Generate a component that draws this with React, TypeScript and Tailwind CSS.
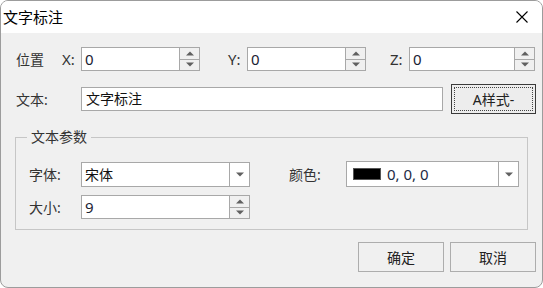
import React from "react";

const FONT = { fontFamily: "'Noto Sans', 'Noto Sans CJK SC', sans-serif" };

function Up() {
  return (
    <svg width="8" height="5" viewBox="0 0 8 5">
      <path d="M0 4.5 L4 0.5 L8 4.5 Z" fill="#606060" />
    </svg>
  );
}
function Down() {
  return (
    <svg width="8" height="5" viewBox="0 0 8 5">
      <path d="M0 0.5 L8 0.5 L4 4.5 Z" fill="#606060" />
    </svg>
  );
}

function Spin({ w, value }: { w: string; value: string }) {
  return (
    <div className={`${w} h-[24px] flex border border-[#a8a8a8] bg-white`}>
      <div className="flex-1 pl-[3px] text-[15px] leading-[22px] text-[#1a2233]">{value}</div>
      <div className="w-[20px] flex flex-col border-l border-[#a8a8a8] bg-[#f0f0f0]">
        <div className="flex-1 flex items-center justify-center border-b border-[#a8a8a8]">
          <Up />
        </div>
        <div className="flex-1 flex items-center justify-center">
          <Down />
        </div>
      </div>
    </div>
  );
}

export default function App() {
  return (
    <div
      style={FONT}
      className="w-[543px] h-[288px] rounded-[8px] border border-[#9c9c9c] overflow-hidden bg-[#f0f0f0] flex flex-col"
    >
      {/* title bar */}
      <div className="h-[32px] bg-white flex items-center justify-between shrink-0">
        <span className="pl-[2px] text-[15px] text-black leading-none">文字标注</span>
        <svg width="12" height="12" viewBox="0 0 12 12" className="mr-[14px]">
          <path d="M0.5 0.5 L11.5 11.5 M11.5 0.5 L0.5 11.5" stroke="#000" strokeWidth="1.1" />
        </svg>
      </div>

      {/* row 1 */}
      <div className="mt-[14px] flex items-center pl-[15px] text-[14px] text-[#333]">
        <span className="w-[46px]">位置</span>
        <span className="w-[19px] text-[15px]">X:</span>
        <Spin w="w-[119px]" value="0" />
        <span className="ml-[28px] w-[19px] text-[15px]">Y:</span>
        <Spin w="w-[119px]" value="0" />
        <span className="ml-[24px] w-[19px] text-[15px]">Z:</span>
        <Spin w="w-[126px]" value="0" />
      </div>

      {/* row 2 */}
      <div className="mt-[13px] h-[30px] flex items-center pl-[15px] text-[14px] text-[#333]">
        <span className="w-[65px]">文本:</span>
        <div className="w-[362px] h-[24px] border border-[#a8a8a8] bg-white pl-[4px] leading-[22px] text-[#111]">
          文字标注
        </div>
        <div className="ml-[8px] w-[85px] h-[30px] border border-[#3a3a3a] bg-[#ededed] p-[2px]">
          <div className="w-full h-full border border-dotted border-[#444] flex items-center justify-center text-[#222] text-[14px]">
            A样式-
          </div>
        </div>
      </div>

      {/* group box */}
      <div className="relative mt-[23px] ml-[14px] w-[513px] border border-[#c6c6c6] pt-[23px] pb-[10px] pl-[13px]">
        <span className="absolute left-[11px] top-[-11px] px-[4px] bg-[#f0f0f0] text-[14px] leading-[20px] text-[#333]">
          文本参数
        </span>
        <div className="flex items-center text-[14px] text-[#333]">
          <span className="w-[52px]">字体:</span>
          <div className="w-[169px] h-[25px] flex border border-[#a8a8a8] bg-white">
            <div className="flex-1 pl-[3px] leading-[23px] text-[#111]">宋体</div>
            <div className="w-[20px] border-l border-[#a8a8a8] flex items-center justify-center">
              <Down />
            </div>
          </div>
          <span className="ml-[39px] w-[57px]">颜色:</span>
          <div className="w-[173px] h-[26px] flex border border-[#a8a8a8] bg-white">
            <div className="flex-1 flex items-center pl-[6px]">
              <div className="w-[28px] h-[12px] bg-black border border-[#555]" />
              <span className="ml-[6px] text-[15px] text-[#1c2a44] leading-none">0, 0, 0</span>
            </div>
            <div className="w-[20px] border-l border-[#a8a8a8] flex items-center justify-center">
              <Down />
            </div>
          </div>
        </div>
        <div className="mt-[8px] flex items-center text-[14px] text-[#333]">
          <span className="w-[52px]">大小:</span>
          <Spin w="w-[169px]" value="9" />
        </div>
      </div>

      {/* buttons */}
      <div className="mt-[12px] flex justify-end gap-[6px] pr-[6px] text-[14px] text-[#222]">
        <div className="w-[86px] h-[30px] border border-[#adadad] bg-[#f0f0f0] flex items-center justify-center">
          确定
        </div>
        <div className="w-[86px] h-[30px] border border-[#adadad] bg-[#f0f0f0] flex items-center justify-center">
          取消
        </div>
      </div>
    </div>
  );
}
